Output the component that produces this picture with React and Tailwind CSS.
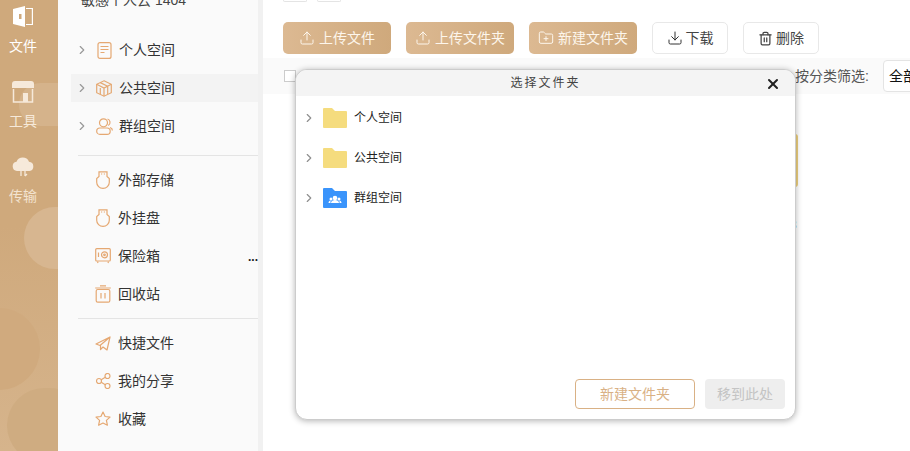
import { ChevronRight, X, Upload, Download, Trash2, FolderPlus } from "lucide-react";

const font = { fontFamily: '"Liberation Sans", "Noto Sans CJK SC", sans-serif' };

// Sidebar icons, all drawn in the same orange outline
const Doc = () => (
  <svg width="15" height="17" viewBox="0 0 15 17" fill="none" stroke="#e5a872" strokeWidth="1.2">
    <rect x="1" y="0.600" width="13" height="15.800" rx="2" />
    <path d="M3.500 4.500h8M3.500 7.500h8M3.500 10.500h4" />
  </svg>
);
const Box = () => (
  <svg width="16" height="17" viewBox="0 0 16 17" fill="none" stroke="#e5a872" strokeWidth="1.2">
    <path d="M8 0.800 15.300 4.300v8.400L8 16.200 0.700 12.700V4.300z" />
    <path d="M0.700 4.300 8 8l7.300-3.700M8 8v8.200M4.300 2.600 11.700 6.300M11.700 6.300v7.800M4.300 8v6.200" />
  </svg>
);
const Users = () => (
  <svg width="17" height="17" viewBox="0 0 17 17" fill="none" stroke="#e5a872" strokeWidth="1.2">
    <circle cx="7.500" cy="4.800" r="4" />
    <rect x="0.700" y="10" width="13.500" height="6.300" rx="3.150" />
    <path d="M11.500 1c2.800.7 3.600 4.800.8 6.600M14 9.500c1.500.5 2.400 1.500 2.400 3" />
  </svg>
);
const Usb = () => (
  <svg width="14" height="18" viewBox="0 0 14 18" fill="none" stroke="#e5a872" strokeWidth="1.2">
    <path d="M3 0.800h8v4.700l2.300 2v3.700a6.300 6.200 0 0 1-12.600 0V7.500L3 5.500z" />
    <path d="M5 3h1.200M7.800 3H9" />
  </svg>
);
const Safe = () => (
  <svg width="16" height="16" viewBox="0 0 16 16" fill="none" stroke="#e5a872" strokeWidth="1.2">
    <rect x="0.700" y="0.700" width="14.600" height="12.300" rx="1" />
    <circle cx="9.500" cy="6.800" r="3" />
    <circle cx="9.500" cy="6.800" r="0.800" />
    <path d="M3.500 4.500v4.500M2.500 13.500 3 15M13.500 13.500 13 15" />
  </svg>
);
const Bin = () => (
  <svg width="16" height="18" viewBox="0 0 16 18" fill="none" stroke="#e5a872" strokeWidth="1.2">
    <path d="M0.200 3h15.600M5 0.800h6" />
    <rect x="1.200" y="4.500" width="13.600" height="12.700" rx="1.500" />
    <path d="M6 8v5.500M10 8v5.500" />
  </svg>
);
const Plane = () => (
  <svg width="16" height="15" viewBox="0 0 16 15" fill="none" stroke="#e5a872" strokeWidth="1.2" strokeLinejoin="round">
    <path d="M15 1 1 8l4 1.500L15 1l-3 13-4-3-2.500 2.500V9.500" />
  </svg>
);
const Share = () => (
  <svg width="15" height="16" viewBox="0 0 15 16" fill="none" stroke="#e5a872" strokeWidth="1.2">
    <circle cx="3" cy="8" r="2.500" />
    <circle cx="11.500" cy="3" r="2.500" />
    <circle cx="11.500" cy="13" r="2.500" />
    <path d="M5.200 6.700 9.300 4.300M5.200 9.300l4.100 2.400" />
  </svg>
);
const Star = () => (
  <svg width="16" height="16" viewBox="0 0 16 16" fill="none" stroke="#e5a872" strokeWidth="1.2" strokeLinejoin="round">
    <path d="M8 1l2.100 4.500 4.900.6-3.600 3.300 1 4.800L8 12l-4.400 2.200 1-4.800L1 6.100l4.900-.6z" />
  </svg>
);

// Rail icons
const FileRail = () => (
  <svg width="20" height="21" viewBox="0 0 20 21" fill="#fff">
    <path d="M0 3 12 0v21L0 18z" />
    <path d="M13 2h7v17h-7v-1h5.800V3H13z" />
    <rect x="6" y="8" width="2.500" height="5" fill="#cfa97c" />
  </svg>
);
const ToolRail = () => (
  <svg width="22" height="22" viewBox="0 0 22 22">
    <path d="M3 0h16a3 3 0 0 1 3 3v4H0V3a3 3 0 0 1 3-3z" fill="#f6e9da" />
    <path d="M1.500 8v13h19V8" fill="none" stroke="#f6e9da" strokeWidth="1.500" />
    <path d="M11 12h5v9h-5z" fill="#f6e9da" />
  </svg>
);
const CloudRail = () => (
  <svg width="22" height="21" viewBox="0 0 22 21">
    <path d="M5 15a4.700 4.700 0 0 1-.5-9.300A6.800 6.800 0 0 1 17 5.700 4.700 4.700 0 0 1 17.500 15z" fill="#f6e9da" />
    <path d="M9 9v11M9 9 7 11M13 20V9M13 20l2-2" fill="none" stroke="#f6e9da" strokeWidth="1.300" />
  </svg>
);

const Folder = () => (
  <svg width="24" height="20" viewBox="0 0 24 20">
    <path d="M0 1a1 1 0 0 1 1-1h8l3 3h11a1 1 0 0 1 1 1v15a1 1 0 0 1-1 1H1a1 1 0 0 1-1-1z" fill="#f5dc7e" />
  </svg>
);
const GroupFolder = () => (
  <svg width="24" height="20" viewBox="0 0 24 20">
    <path d="M0 1a1 1 0 0 1 1-1h8l3 3h11a1 1 0 0 1 1 1v15a1 1 0 0 1-1 1H1a1 1 0 0 1-1-1z" fill="#3a94fb" />
    <circle cx="12" cy="10" r="2.300" fill="#fff" />
    <path d="M8 15c0-2 2-3 4-3s4 1 4 3z" fill="#fff" />
    <circle cx="8" cy="11" r="1.500" fill="#fff" />
    <circle cx="16" cy="11" r="1.500" fill="#fff" />
    <path d="M5.500 15c0-1.500 1-2.500 2-2.500v2.500zM18.500 15c0-1.500-1-2.500-2-2.500v2.500z" fill="#fff" />
  </svg>
);

function RailItem({ icon, label, textClass }) {
  return (
    <div className="flex h-[75px] flex-col items-center">
      <div className="flex h-[21px] items-center justify-center">{icon}</div>
      <div className={`mt-[10px] text-[14px] leading-[18px] ${textClass}`}>{label}</div>
    </div>
  );
}

function SideRow({ icon, label, arrow, active }) {
  return (
    <div className={`flex h-[28px] items-center ${active ? "bg-[#f3f3f3]" : ""}`}>
      <div className="flex w-[21px] justify-center">
        {arrow && <ChevronRight size={14} strokeWidth={2} className="text-[#999]" />}
      </div>
      <div className={`flex w-[22px] justify-center ${arrow ? "ml-[1px]" : "ml-0"}`}>{icon}</div>
      <span className="ml-[4px] text-[14px] text-[#333]">{label}</span>
    </div>
  );
}

function GoldButton({ icon, label, width }) {
  return (
    <button
      className={`flex h-[32px] ${width} items-center justify-center gap-[4px] rounded-[5px] bg-gradient-to-r from-[#dcb992] to-[#cfa97c] text-[14px] text-[#fdf6ec]`}
    >
      {icon}
      {label}
    </button>
  );
}

function TreeRow({ icon, label }) {
  return (
    <div className="flex h-[40px] items-center">
      <ChevronRight size={14} strokeWidth={2} className="ml-[6px] text-[#8f8f8f]" />
      <div className="ml-[7px] flex">{icon}</div>
      <span className="ml-[7px] text-[12px] text-[#222]">{label}</span>
    </div>
  );
}

export default function App() {
  return (
    <div className="relative flex h-[451px] w-[910px] overflow-hidden bg-white" style={font}>
      {/* Rail */}
      <div className="relative w-[58px] shrink-0 overflow-hidden bg-gradient-to-b from-[#cfa97c] via-[#cfa97c] to-[#d6b48c]">
        <div className="absolute left-[19px] top-[83px] h-[43px] w-[70px] rounded-full bg-[#d5b38b]" />
        <div className="absolute left-[24px] top-[207px] h-[62px] w-[90px] rounded-full bg-[#d7b690]" />
        <div className="absolute -left-[50px] top-[308px] h-[82px] w-[90px] rounded-full bg-[#d0aa7e]" />
        <div className="absolute left-[7px] top-[388px] h-[75px] w-[80px] rounded-full bg-[#cfac81]" />
        <div className="relative flex flex-col items-center pr-[12px] pt-[6px]">
          <RailItem icon={<FileRail />} label="文件" textClass="text-white" />
          <RailItem icon={<ToolRail />} label="工具" textClass="text-[#f6e9da]" />
          <RailItem icon={<CloudRail />} label="传输" textClass="text-[#f3e3d0]" />
        </div>
      </div>

      {/* Sidebar */}
      <div className="relative w-[200px] shrink-0 overflow-hidden bg-[#fafafa]">
        <div className="-mt-[6px] h-[12px] whitespace-nowrap pl-[23px] text-[14px] leading-[12px] text-[#444]">敏感个人云 1404</div>
        <div className="ml-[13px] mt-[30px]">
          <div className="flex flex-col gap-[10px]">
            <SideRow icon={<Doc />} label="个人空间" arrow />
            <SideRow icon={<Box />} label="公共空间" arrow active />
            <SideRow icon={<Users />} label="群组空间" arrow />
          </div>
          <div className="ml-[7px] mb-[10px] mt-[15px] h-[1px] bg-[#e4e4e4]" />
          <div className="flex flex-col gap-[10px]">
            <SideRow icon={<Usb />} label="外部存储" />
            <SideRow icon={<Usb />} label="外挂盘" />
            <SideRow icon={<Safe />} label="保险箱" />
            <SideRow icon={<Bin />} label="回收站" />
          </div>
          <div className="my-[10px] ml-[7px] h-[1px] bg-[#e4e4e4]" />
          <div className="flex flex-col gap-[10px]">
            <SideRow icon={<Plane />} label="快捷文件" />
            <SideRow icon={<Share />} label="我的分享" />
            <SideRow icon={<Star />} label="收藏" />
          </div>
        </div>
        <div className="absolute right-0 top-[250px] text-[12px] font-bold leading-[14px] text-[#222]">...</div>
      </div>

      {/* Sidebar edge */}
      <div className="w-[5px] shrink-0 bg-[#f1f1f1]" />

      {/* Main */}
      <div className="relative min-w-0 flex-1">
        <div className="flex gap-[10px] pl-[20px]">
          <div className="h-[2px] w-[24px] rounded-b-[2px] border border-t-0 border-[#e4e4e4]" />
          <div className="h-[2px] w-[24px] rounded-b-[2px] border border-t-0 border-[#e4e4e4]" />
        </div>
        <div className="mt-[20px] flex gap-[15px] pl-[20px]">
          <GoldButton width="w-[108px]" label="上传文件" icon={<Upload size={16} strokeWidth={1.5} />} />
          <GoldButton width="w-[108px]" label="上传文件夹" icon={<Upload size={16} strokeWidth={1.5} />} />
          <GoldButton width="w-[108px]" label="新建文件夹" icon={<FolderPlus size={16} strokeWidth={1.5} />} />
          <button className="flex h-[32px] w-[76px] items-center justify-center gap-[3px] rounded-[5px] border border-[#e8e8e8] bg-white text-[14px] text-[#444]">
            <Download size={16} strokeWidth={1.5} className="text-[#333]" />
            下载
          </button>
          <button className="flex h-[32px] w-[76px] items-center justify-center gap-[3px] rounded-[5px] border border-[#e8e8e8] bg-white text-[14px] text-[#444]">
            <Trash2 size={15} strokeWidth={2} className="text-[#444]" />
            删除
          </button>
        </div>
        <div className="mt-[4px] flex h-[36px] items-center bg-[#fafafa] pl-[21px]">
          <div className="h-[12px] w-[12px] shrink-0 border border-[#ccc] bg-white" />
          <span className="ml-[499px] shrink-0 whitespace-nowrap text-[14px] text-[#555]">按分类筛选:</span>
          <div className="ml-[14px] flex h-[32px] w-[60px] shrink-0 items-center rounded-l-[4px] border border-[#e4e4e4] bg-white pl-[5px] text-[14px] text-[#111]">
            全部
          </div>
        </div>
        {/* Folder and caption behind the dialog */}
        <div className="absolute left-[520px] top-[134px] h-[53px] w-[15px] rounded-r-[3px] bg-[#edd07f]" />
        <div className="absolute left-[527px] top-[218px] text-[12px] leading-[14px] text-[#5d7fa8]">3</div>
      </div>

      {/* Dialog */}
      <div className="absolute left-[295px] top-[69px] flex h-[351px] w-[501px] flex-col overflow-hidden rounded-[12px] border border-[#ccc] bg-white shadow-[0_1px_6px_rgba(0,0,0,0.3)]">
        <div className="relative flex h-[26px] shrink-0 items-center justify-center bg-[#f4f4f4] text-[12px] tracking-[2px] text-[#444]">
          选择文件夹
          <X size={16} strokeWidth={3} className="absolute right-[14px] top-[6px] text-[#222]" />
        </div>
        <div className="flex-1 pt-[2px]">
          <TreeRow icon={<Folder />} label="个人空间" />
          <TreeRow icon={<Folder />} label="公共空间" />
          <TreeRow icon={<GroupFolder />} label="群组空间" />
        </div>
        <div className="flex justify-end gap-[10px] pb-[10px] pr-[10px]">
          <button className="h-[30px] w-[120px] rounded-[4px] border border-[#d9b185] bg-white text-[14px] text-[#d9b185]">
            新建文件夹
          </button>
          <button className="h-[30px] w-[80px] rounded-[4px] bg-[#eeeeee] text-[14px] text-[#c4c4c4]">移到此处</button>
        </div>
      </div>
    </div>
  );
}
